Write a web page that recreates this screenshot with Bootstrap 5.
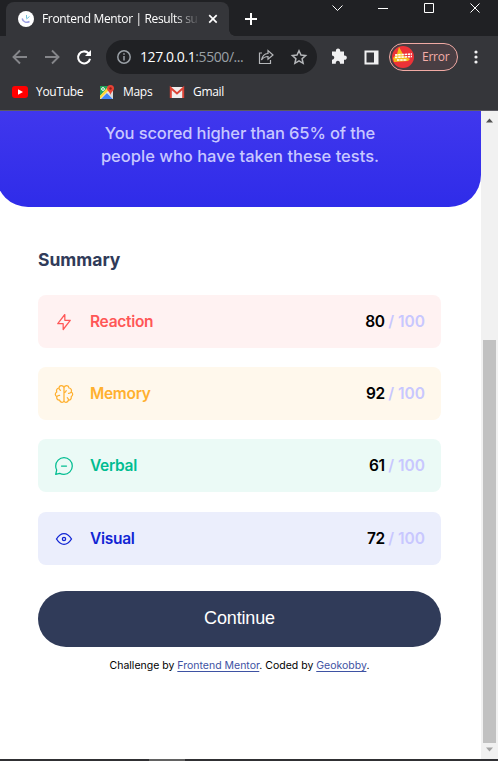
<!DOCTYPE html>
<html lang="en">
<head>
<meta charset="utf-8">
<meta name="viewport" content="width=device-width, initial-scale=1">
<title>Frontend Mentor | Results summary component</title>
<link href="https://cdn.jsdelivr.net/npm/bootstrap@5.3.0/dist/css/bootstrap.min.css" rel="stylesheet">
<style>
html, body { height: 761px; overflow: hidden; }
body { font-family: "Open Sans", "Noto Sans", sans-serif; background: #fff; color: #000; }
svg { display: block; flex: none; }
span, a { white-space: nowrap; }
.tabstrip { height: 36px; background: #202124; }
.tab { width: 223px; height: 34px; margin: 2px 0 0 6px; padding: 0 11px 0 12px; background: #35363a; border-radius: 8px 8px 0 0; }
.tab-corner { width: 6px; height: 6px; background: radial-gradient(circle at 100% 0, #202124 5.5px, #35363a 6px); }
.favicon { width: 16px; height: 16px; background: #fff; margin-right: 8px; }
.tab-title { width: 156px; font-size: 12px; line-height: 16px; color: #fff; letter-spacing: -.34px; -webkit-mask-image: linear-gradient(90deg, #000 132px, transparent 158px); mask-image: linear-gradient(90deg, #000 132px, transparent 158px); }
.toolbar { height: 42px; background: #35363a; padding-left: 12px; }
.omnibox { width: 211px; height: 34px; margin-left: 14px; background: #202124; padding: 0 9px 0 11px; color: #9aa0a6; }
.address { font-size: 14px; line-height: 18px; width: 111px; margin-left: 9px; letter-spacing: -.42px; }
.address b { font-weight: 400; color: #fff; }
.profile { width: 69px; height: 28px; margin-left: 7px; border: 1px solid #f1aaa4; background: #493e43; color: #f6aea9; font-size: 12px; letter-spacing: -.25px; padding-left: 2px; }
.bookmarks { height: 32px; background: #35363a; color: #fff; font-size: 12px; padding: 0 0 5px 12px; }
.bookmark-name { width: 63px; letter-spacing: -.3px; }
.bookmark-name.maps { width: 46px; }
.edge-line { height: 1px; background: #5b5a62; }
.viewport-area { height: 648px; }
.page { width: 481px; font-family: Inter, "Liberation Sans", sans-serif; overflow: hidden; }
.hero { height: 96px; margin-left: -4px; padding: 11px 0 0 3px; background: linear-gradient(#4037ed, #2f2ce9); border-radius: 0 0 32px 32px; color: #c8c7ff; font-size: 16.5px; font-weight: 500; line-height: 23px; }
.hero span:first-child { letter-spacing: -.12px; }
.summary { padding: 41px 40px 0 38px; }
.summary-title { font-size: 17.5px; font-weight: 700; line-height: 24px; color: #303b59; margin-bottom: 23px; }
.score { height: 53px; margin-bottom: 19px; border-radius: 8px; padding: 0 16px; font-weight: 600; }
.score svg { margin-right: 16px; }
.label-text { font-size: 15.5px; letter-spacing: -.3px; }
.points { font-size: 15.5px; letter-spacing: -.4px; }
.points em { font-style: normal; color: #c8c7ff; letter-spacing: 0; }
.reaction { background: #fff2f2; color: #ff5757; }
.memory { background: #fff8ec; color: #ffb02f; }
.verbal { background: #ebfaf6; color: #00bd91; }
.verbal { margin-bottom: 20px; }
.visual { background: #ebeefc; color: #1125d4; }
.continue-btn, .continue-btn:hover { height: 56px; margin-top: 26px; background: #303b59; color: #fff; font: 18px "Liberation Sans", Arial, sans-serif; letter-spacing: -.15px; padding-bottom: 8px; }
.credit { font-size: 10.5px; line-height: 14px; margin-top: 12px; }
.credit a { color: #3e52a3; text-underline-offset: 2px; }
.scroller { width: 17px; background: #f1f1f1; padding: 7px 0 7px; }
.thumb { width: 13px; height: 403px; background: #c1c1c1; margin-top: 217px; }
.taskbar { height: 2px; background: #303033; padding-left: 149px; }
.taskbar div { width: 36px; height: 2px; background: #626262; }
</style>
<script src="https://cdn.jsdelivr.net/npm/bootstrap@5.3.0/dist/js/bootstrap.bundle.min.js"></script>
</head>
<body>
<header>
  <div class="tabstrip d-flex">
    <div class="tab d-flex align-items-center">
      <div class="favicon rounded-circle"><svg width="16" height="16" fill="none"><path d="M4.2 7.5C5 11.7 9 12 11.5 10.5" stroke="#9b9ee0" stroke-width="1.5"/><path d="M8.5 4v3.5M8.5 8l3-2.5" stroke="#75c4da"/></svg></div>
      <span class="tab-title">Frontend Mentor | Results su</span>
      <svg class="ms-auto" width="10" height="10" stroke="#fff" stroke-width="1.7"><path d="M1.2 1.2l7.5 7.5M8.7 1.2L1.2 8.700"/></svg>
    </div>
    <div class="tab-corner align-self-end"></div>
    <svg width="263" height="36" fill="none" stroke="#fff"><path d="M10 19h12M16 13v12" stroke-width="2"/><path d="M97.500 5.500l5 5 5-5"/><path d="M143 8.500h10M189.500 3.500h9v9h-9zM235.500 3.500l9 9M244.500 3.500l-9 9"/></svg>
  </div>
  <div class="toolbar d-flex align-items-center">
    <svg width="80" height="20" fill="none" stroke-width="1.9"><path d="M15 10H2.500M8 3.500L1.500 10 8 16.500M33 10h12.500M40 3.500l6.500 6.500-6.500 6.500" stroke="#85868a"/><path d="M76.500 6.300A6 6 0 1 0 78 11.700" stroke="#fff" stroke-width="2.1"/><path d="M79 3v6h-6z" fill="#fff"/></svg>
    <div class="omnibox rounded-pill d-flex align-items-center">
      <svg width="14" height="14" fill="none" stroke="currentColor" stroke-width="1.5"><circle cx="7" cy="7" r="6.200"/><path d="M7 6v4.500M7 3.200v1.600"/></svg>
      <span class="address"><b>127.0.0.1</b>:5500/...</span>
      <svg class="ms-auto" width="50" height="18" fill="none" stroke="#b5b7ba" stroke-width="1.200"><path d="M4 5H1.500v10.500h11V12M3.500 12c.8-4.500 3.200-6.300 6.500-6.500V2.500l5 4.500-5 4.300V8.500c-3 0-4.800 1-6.500 3.500z"/><path d="M41 2.800l2 4.300 4.600.5-3.500 3.100 1 4.600-4.100-2.400-4.100 2.400 1-4.600-3.500-3.100 4.600-.5z" stroke-width="1.500"/></svg>
    </div>
    <svg width="50" height="20" fill="#f1f1f2" style="margin-left:15px"><path d="M1 5h4c-1-4 5-4 4.200 0H13v4c3.800-.8 3.800 4.800 0 4.200v4H9c.5-4-4.800-4-4.200 0H1v-4c3-.200 3-4.200 0-4.200z" transform="translate(-1 -.5)"/><path d="M33.500 4.500h12v12h-12z" fill="none" stroke="#f1f1f2" stroke-width="2"/><path d="M42 4h4v13h-4z"/></svg>
    <div class="profile rounded-pill d-flex align-items-center">
      <svg width="22" height="22"><circle cx="11" cy="11" r="11" fill="#ed3237"/><path d="M7 1l5 9 6 3-2 2-14 1-1-4 4-4z" fill="#f4bd18"/><path d="M3 9l17-1M3 11.500l17-1M5 14h10" stroke="#fff" stroke-width="1.600" stroke-dasharray="2.500 .7"/></svg>
      <span class="ps-2">Error</span>
    </div>
    <svg class="ms-auto me-3" width="10" height="16" fill="#f1f1f2"><circle cx="4" cy="3" r="1.600"/><circle cx="4" cy="8" r="1.600"/><circle cx="4" cy="13" r="1.600"/></svg>
  </div>
  <div class="bookmarks d-flex align-items-center">
    <svg width="16" height="16" class="me-2"><rect y="2" width="16" height="12" rx="3" fill="#f00"/><path d="M6 5.200v5.600L11 8z" fill="#fff"/></svg><span class="bookmark-name">YouTube</span>
    <svg width="16" height="16" class="me-2"><path d="M1 2h13v13H1z" fill="#e8e8e8"/><path d="M1 2h9L1 12z" fill="#20a35a"/><path d="M2 15l6-6 6 6z" fill="#4285f4"/><path d="M1 12l8-9 2 2-10 10z" fill="#fdd835"/><path d="M8 9l6 6V8z" fill="#d9d9d9"/><circle cx="4" cy="5" r="1.400" fill="none" stroke="#fff"/><path d="M11.500 1A3.500 3.500 0 0 1 15 4.500C15 7 12 8 11.500 11 11 8 8 7 8 4.500A3.500 3.500 0 0 1 11.500 1z" fill="#e94235"/><circle cx="11.500" cy="4.500" r="1.200" fill="#8f1f17"/></svg><span class="bookmark-name maps">Maps</span>
    <svg width="16" height="16" class="me-2"><rect x="1" y="3" width="14" height="11" rx="1" fill="#f0eeee"/><path d="M1.800 14V4L8 9.500 14.200 4v10" fill="none" stroke="#db4437" stroke-width="2"/></svg><span class="bookmark-name">Gmail</span>
  </div>
  <div class="edge-line"></div>
</header>
<div class="viewport-area d-flex">
  <main class="page">
    <section class="hero d-flex flex-column align-items-center"><span>You scored higher than 65% of the</span><span>people who have taken these tests.</span></section>
    <section class="summary">
      <h1 class="summary-title">Summary</h1>
      <div class="score reaction d-flex align-items-center"><svg width="20" height="20" fill="none" stroke="currentColor" stroke-width="1.250" stroke-linejoin="round"><path d="M10.830 8.330V2.500L3.750 11.670h5.420v5.830l7.080-9.170z"/></svg><span class="label-text">Reaction</span><span class="points ms-auto text-black">80 <em>/ 100</em></span></div>
      <div class="score memory d-flex align-items-center"><svg width="20" height="20" fill="none" stroke="currentColor" stroke-width="1.250" stroke-linecap="round" stroke-linejoin="round"><path d="M10 3.600v13M10 3.600C9 .9 5.300 1 5 4 2.800 4.200 2 6.300 2.800 8 .8 9.200.8 11.500 2.800 12.700 2.300 15 3.700 16.200 5.500 16 6.200 18.900 9.800 19 10 16.500M10 3.600C11 .9 14.700 1 15 4c2.200.2 3 2.300 2.200 4 2 1.200 2 3.500 0 4.700.5 2.300-.9 3.500-2.700 3.300-.7 2.900-4.300 3-4.500.5M5 4c0 1.200.5 1.900 1.500 2.300M17.200 8c-.7 1-1.500 1.400-2.700 1.300M2.800 12.700c.8-1 1.600-1.400 2.800-1.300M14.500 16c0-1-.4-1.700-1.200-2.300M10 8.500c1.200 0 2-.7 2.200-1.900"/></svg><span class="label-text">Memory</span><span class="points ms-auto text-black">92 <em>/ 100</em></span></div>
      <div class="score verbal d-flex align-items-center"><svg width="20" height="20" fill="none" stroke="currentColor" stroke-width="1.250" stroke-linecap="round" stroke-linejoin="round"><path d="M7.500 10h5M10 18.300A8.300 8.300 0 1 0 1.700 10c0 1.500.4 2.900 1 4L1.700 18.300l4-.9c1.300.6 2.700.9 4.300.9z"/></svg><span class="label-text">Verbal</span><span class="points ms-auto text-black">61 <em>/ 100</em></span></div>
      <div class="score visual d-flex align-items-center mb-0"><svg width="20" height="20" fill="none" stroke="currentColor" stroke-width="1.350"><circle cx="10" cy="10" r="1.600"/><path d="M2.500 10C7 2.900 13 2.900 17.500 10 13 17.100 7 17.100 2.500 10z"/></svg><span class="label-text">Visual</span><span class="points ms-auto text-black">72 <em>/ 100</em></span></div>
      <button class="continue-btn btn border-0 rounded-pill w-100">Continue</button>
      <div class="credit text-center">Challenge by <a href="#">Frontend Mentor</a>. Coded by <a href="#">Geokobby</a>.</div>
    </section>
  </main>
  <aside class="scroller d-flex flex-column align-items-center">
    <svg width="7" height="5"><path d="M0 4.500h7L3.500.5z" fill="#505050"/></svg>
    <div class="thumb"></div>
    <svg class="mt-auto" width="7" height="5"><path d="M0 .5h7L3.500 4.500z" fill="#a3a3a3"/></svg>
  </aside>
</div>
<footer class="taskbar"><div></div></footer>
</body>
</html>
